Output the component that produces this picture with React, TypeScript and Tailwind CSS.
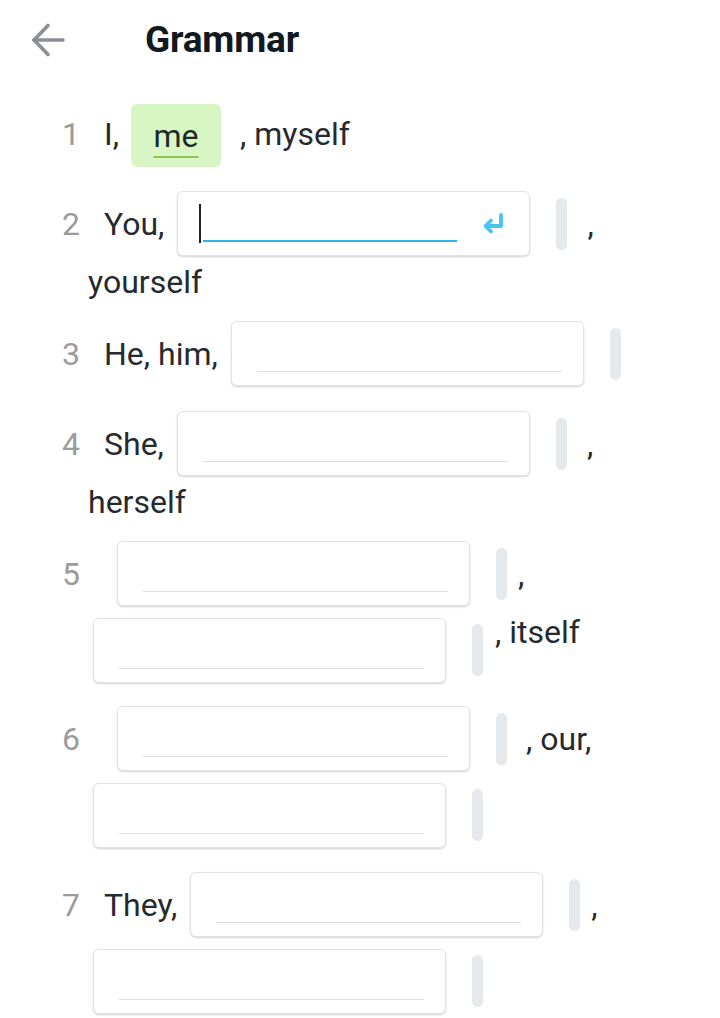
import React from "react";

const textColor = "text-[#262a2e]";

const Num = ({ n }: { n: number }) => (
  <span className="w-[42px] shrink-0 text-[#9b9b9b]">{n}</span>
);

const Pill = ({ className = "ml-[26px]" }: { className?: string }) => (
  <span className={`${className} h-[52px] w-[11px] shrink-0 rounded-full bg-[#e6e9ec]`} />
);

const Blank = ({ className = "ml-[13px]" }: { className?: string }) => (
  <div
    className={`${className} flex h-[65px] w-[353px] shrink-0 rounded-[6px] border border-[#e4e4df] bg-white pl-[25px] pr-[21px] pt-[49px] shadow-[0_1px_2px_rgba(0,0,0,0.18)]`}
  >
    <div className="h-px w-full bg-[#dedede]" />
  </div>
);

const ActiveBlank = () => (
  <div className="ml-[13px] flex h-[65px] w-[353px] shrink-0 items-start rounded-[6px] border border-[#e4e4df] bg-white pl-[21px] shadow-[0_1px_2px_rgba(0,0,0,0.18)]">
    <div className="mt-[12px] h-[39px] w-[2px] bg-[#222]" />
    <div className="ml-[2px] mt-[48px] h-[2px] w-[254px] bg-[#2bb5ea]" />
    <svg
      className="ml-[24px] mt-[20px]"
      width="24"
      height="24"
      viewBox="0 0 24 24"
      fill="none"
      stroke="#4cc4f2"
      strokeWidth="3.8"
      strokeLinecap="round"
      strokeLinejoin="round"
    >
      <path d="M20 3v11H5" />
      <path d="M10 8.5 4.5 14l5.5 5.5" />
    </svg>
  </div>
);

const Line = ({ children }: { children: React.ReactNode }) => (
  <div className="flex h-[77px] items-center whitespace-nowrap">{children}</div>
);

const TextLine = ({ children }: { children: React.ReactNode }) => (
  <div className="flex h-[40px] items-center whitespace-nowrap pl-[26px]">{children}</div>
);

const Wrap = ({ children }: { children: React.ReactNode }) => (
  <div className="flex h-[76px] items-center whitespace-nowrap pl-[26px]">{children}</div>
);

export default function App() {
  return (
    <div
      className={`min-h-screen w-[720px] bg-white ${textColor}`}
      style={{ fontFamily: "Roboto, 'Liberation Sans', sans-serif" }}
    >
      <div className="flex h-[80px] items-center">
        <svg
          className="ml-[30px]"
          width="36"
          height="36"
          viewBox="0 0 36 36"
          fill="none"
          stroke="#8b8f93"
          strokeWidth="3.6"
          strokeLinecap="round"
          strokeLinejoin="round"
        >
          <path d="M33 18H4" />
          <path d="M18 3.5 4 18l14 14.5" />
        </svg>
        <h1 className="ml-[79px] text-[37px] font-bold tracking-[-0.2px] text-[#111820]">
          Grammar
        </h1>
      </div>

      <div className="flex flex-col gap-[13px] pl-[62px] pt-[15px] text-[32px]">
        <div>
          <Line>
            <Num n={1} />
            <span>I,</span>
            <div className="ml-[12px] mt-[4px] flex h-[63px] w-[90px] items-center justify-center rounded-[6px] bg-[#d8f5c4]">
              <span className="text-[#1d2b28] underline decoration-[#8dc456] decoration-2 underline-offset-[9px]">
                me
              </span>
            </div>
            <span className="ml-[19px]">, myself</span>
          </Line>
        </div>

        <div>
          <Line>
            <Num n={2} />
            <span>You,</span>
            <ActiveBlank />
            <Pill />
            <span className="ml-[20px]">,</span>
          </Line>
          <TextLine>yourself</TextLine>
        </div>

        <div>
          <Line>
            <Num n={3} />
            <span>He, him,</span>
            <Blank />
            <Pill />
          </Line>
        </div>

        <div>
          <Line>
            <Num n={4} />
            <span>She,</span>
            <Blank />
            <Pill />
            <span className="ml-[20px]">,</span>
          </Line>
          <TextLine>herself</TextLine>
        </div>

        <div>
          <Line>
            <Num n={5} />
            <Blank />
            <Pill />
            <span className="ml-[11px]">,</span>
          </Line>
          <Wrap>
            <Blank className="ml-[5px]" />
            <Pill />
            <span className="-mt-[36px] ml-[12px]">, itself</span>
          </Wrap>
        </div>

        <div className="-mt-px">
          <Line>
            <Num n={6} />
            <Blank />
            <Pill />
            <span className="ml-[19px]">, our,</span>
          </Line>
          <Wrap>
            <Blank className="ml-[5px]" />
            <Pill />
          </Wrap>
        </div>

        <div>
          <Line>
            <Num n={7} />
            <span>They,</span>
            <Blank />
            <Pill />
            <span className="ml-[11px]">,</span>
          </Line>
          <Wrap>
            <Blank className="ml-[5px]" />
            <Pill />
          </Wrap>
        </div>
      </div>
    </div>
  );
}
